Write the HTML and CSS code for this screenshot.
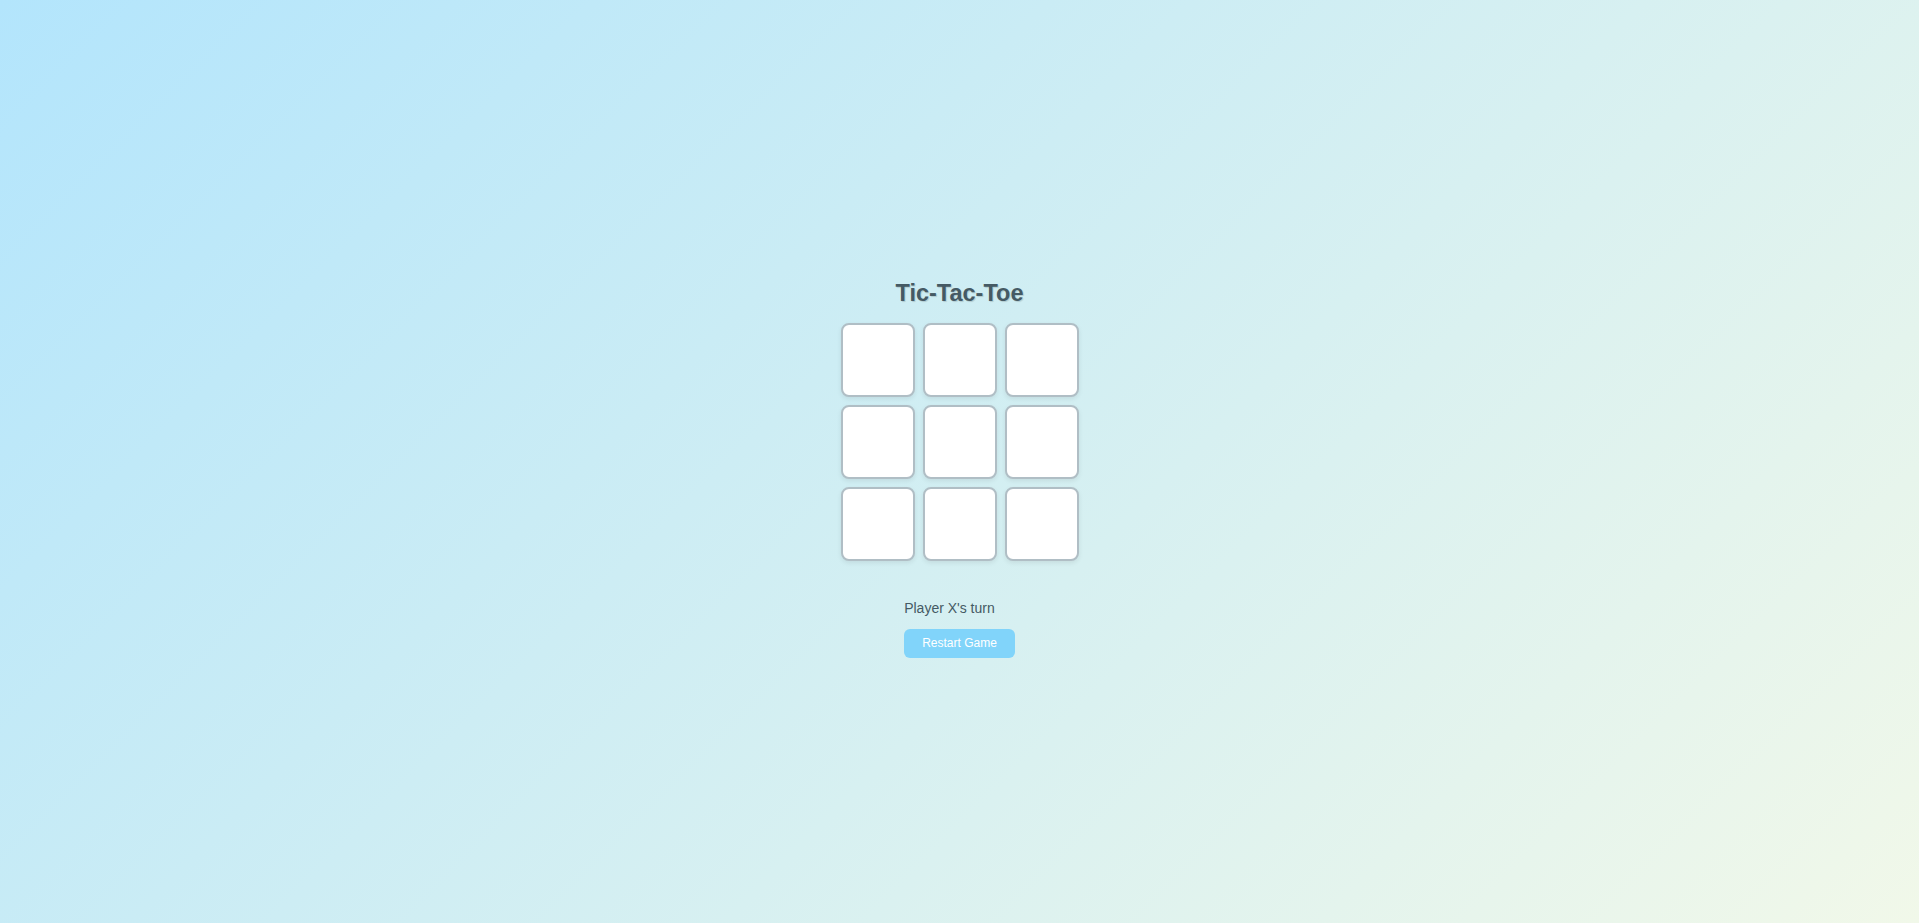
FILE: index.html
```html
<!DOCTYPE html>
<html lang="en">
<head>
<meta charset="utf-8">
<title>Tic-Tac-Toe</title>
<link rel="stylesheet" href="styles.css">
</head>
<body>
<main class="game">
  <h1 class="title">Tic-Tac-Toe</h1>
  <div class="board">
    <button class="cell"></button>
    <button class="cell"></button>
    <button class="cell"></button>
    <button class="cell"></button>
    <button class="cell"></button>
    <button class="cell"></button>
    <button class="cell"></button>
    <button class="cell"></button>
    <button class="cell"></button>
  </div>
  <div class="controls">
    <p class="status">Player X's turn</p>
    <button class="restart">Restart Game</button>
  </div>
</main>
</body>
</html>
```
FILE: styles.css
```css
html, body {
  margin: 0;
  height: 100%;
}
body {
  font-family: "Liberation Sans", Arial, sans-serif;
  background: linear-gradient(135deg, #b3e5fc 0%, #f1f8e9 100%);
  display: flex;
  align-items: center;
  justify-content: center;
  min-height: 100vh;
}
.game {
  display: flex;
  flex-direction: column;
  align-items: center;
  padding-top: 14px;
}
.title {
  margin: 0 0 16px;
  font-size: 23.5px;
  font-weight: bold;
  color: #455a64;
  text-shadow: 1px 1px 1px rgba(0, 0, 0, 0.15);
}
.board {
  display: grid;
  grid-template-columns: repeat(3, 74px);
  grid-auto-rows: 74px;
  gap: 8px;
}
.cell {
  box-sizing: border-box;
  width: 74px;
  height: 74px;
  padding: 0;
  background: #ffffff;
  border: 2px solid #b0bec5;
  border-radius: 8px;
  box-shadow: 0 2px 5px rgba(0, 0, 0, 0.08);
}
.controls {
  display: flex;
  flex-direction: column;
  align-items: flex-start;
  margin-top: 39px;
}
.status {
  margin: 0 0 13px;
  font-size: 14px;
  color: #455a64;
}
.restart {
  font-family: "Liberation Sans", Arial, sans-serif;
  font-size: 12px;
  line-height: 13px;
  padding: 8px 18px;
  color: #ffffff;
  background: #81d4fa;
  border: none;
  border-radius: 6px;
}
```
